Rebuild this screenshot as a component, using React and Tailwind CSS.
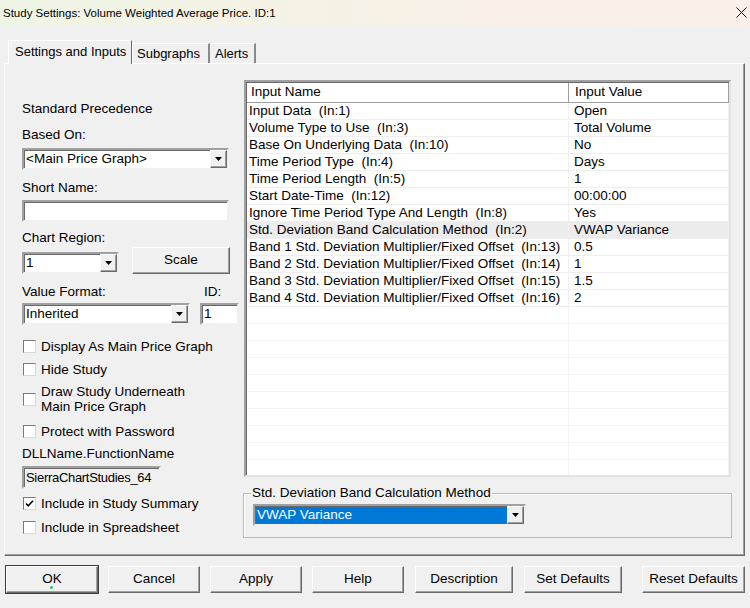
import React from "react";

const font = { fontFamily: '"Liberation Sans", Arial, sans-serif' };

const rows = [
  ["Input Data  (In:1)", "Open"],
  ["Volume Type to Use  (In:3)", "Total Volume"],
  ["Base On Underlying Data  (In:10)", "No"],
  ["Time Period Type  (In:4)", "Days"],
  ["Time Period Length  (In:5)", "1"],
  ["Start Date-Time  (In:12)", "00:00:00"],
  ["Ignore Time Period Type And Length  (In:8)", "Yes"],
  ["Std. Deviation Band Calculation Method  (In:2)", "VWAP Variance", true],
  ["Band 1 Std. Deviation Multiplier/Fixed Offset  (In:13)", "0.5"],
  ["Band 2 Std. Deviation Multiplier/Fixed Offset  (In:14)", "1"],
  ["Band 3 Std. Deviation Multiplier/Fixed Offset  (In:15)", "1.5"],
  ["Band 4 Std. Deviation Multiplier/Fixed Offset  (In:16)", "2"],
];

const emptyRows = Array.from({ length: 10 });

const sunken =
  "border-2 border-t-[#a0a0a0] border-l-[#a0a0a0] border-r-[#f0f0f0] border-b-[#f0f0f0] shadow-[inset_1px_1px_0_#696969]";
const raised =
  "border border-t-white border-l-white border-r-[#696969] border-b-[#696969] shadow-[inset_-1px_-1px_0_#a0a0a0] bg-[#f0f0f0]";

const Arrow = () => (
  <div className={`w-[17px] h-full flex items-center justify-center ${raised}`}>
    <svg width="7" height="4" viewBox="0 0 7 4">
      <path d="M0 0h7L3.5 4z" fill="#000" />
    </svg>
  </div>
);

const Combo = ({ value, className = "", blue }) => (
  <div className={`flex h-[22px] ${sunken} ${className} ${blue ? "bg-[#0078d7] text-white" : "bg-white"}`}>
    <div className="flex-1 pl-[2px] leading-[18px] whitespace-nowrap overflow-hidden">{value}</div>
    <div className="h-[18px] bg-white">
      <Arrow />
    </div>
  </div>
);

const Check = ({ checked, children, className = "" }) => (
  <div className={`flex items-center ${className}`}>
    <div className="w-[13px] h-[13px] ml-[1px] mr-[5px] bg-white border border-t-[#7a7a7a] border-l-[#7a7a7a] border-r-[#d8d8d8] border-b-[#d8d8d8] flex items-center justify-center shrink-0">
      {checked && (
        <svg width="9" height="9" viewBox="0 0 9 9">
          <path d="M1 4.5l2.2 2.3L8 1.8" stroke="#000" strokeWidth="1.6" fill="none" />
        </svg>
      )}
    </div>
    <div className="leading-[15px]">{children}</div>
  </div>
);

const Btn = ({ children, className = "", def }) => (
  <button
    className={`relative h-[27px] ${raised} ${def ? "outline outline-1 outline-[#3c3c3c]" : ""} ${className}`}
  >
    {children}
    {def && <span className="absolute left-[43px] top-[19px] w-[3px] h-[3px] rounded-full bg-[#22c55e]" />}
  </button>
);

export default function App() {
  return (
    <div className="w-[750px] h-[608px] bg-[#f0f0f0] text-black text-[13.5px] overflow-hidden" style={font}>
      {/* title bar */}
      <div className="h-[25px] flex items-center justify-between pl-[3px] pr-[3px] bg-gradient-to-r from-[#eef5e4] via-[#f7f1e6] to-[#faf0e8]">
        <span className="text-[11.5px] leading-[14px]">Study Settings: Volume Weighted Average Price. ID:1</span>
        <svg width="11" height="11" viewBox="0 0 11 11">
          <path d="M0.5 0.5l10 10M10.5 0.5l-10 10" stroke="#111" strokeWidth="1" />
        </svg>
      </div>

      {/* tabs */}
      <div className="flex items-end pl-[8px] pt-[15px] text-[13px]">
        <div className="relative z-10 -mb-px h-[24px] w-[124px] bg-[#f0f0f0] border-t border-l border-t-white border-l-white border-r border-r-[#696969] pl-[6px] leading-[22px]">
          Settings and Inputs
        </div>
        <div className="h-[20px] w-[78px] border-t border-l border-t-white border-l-white border-r-2 border-r-[#8a8a8a] pl-[4px] leading-[19px]">
          Subgraphs
        </div>
        <div className="h-[20px] w-[46px] border-t border-t-white border-r-2 border-r-[#8a8a8a] pl-[5px] leading-[19px]">
          Alerts
        </div>
      </div>

      {/* tab panel */}
      <div className="ml-[4px] w-[741px] h-[493px] border border-t-white border-l-white border-r-[#696969] border-b-[#696969] shadow-[inset_-1px_-1px_0_#a0a0a0] flex pl-[17px]">
        {/* left column */}
        <div className="w-[220px] flex flex-col">
          <div className="mt-[37px] h-[16px] leading-[16px]">Standard Precedence</div>
          <div className="mt-[10px] h-[16px] leading-[16px]">Based On:</div>
          <Combo value="<Main Price Graph>" className="mt-[5px] w-[207px]" />
          <div className="mt-[10px] h-[16px] leading-[16px]">Short Name:</div>
          <div className={`mt-[4px] w-[207px] h-[22px] bg-white ${sunken}`} />
          <div className="mt-[8px] h-[16px] leading-[16px]">Chart Region:</div>
          <div className="mt-[1px] flex items-start h-[27px]">
            <Combo value="1" className="mt-[5px] w-[97px]" />
            <Btn className="ml-[13px] w-[98px]">Scale</Btn>
          </div>
          <div className="mt-[10px] h-[16px] leading-[16px] flex">
            <span className="w-[182px]">Value Format:</span>
            <span>ID:</span>
          </div>
          <div className="mt-[3px] flex">
            <Combo value="Inherited" className="w-[168px]" />
            <div className={`ml-[10px] w-[39px] h-[22px] bg-white pl-[2px] leading-[18px] ${sunken}`}>1</div>
          </div>
          <Check className="mt-[13px] h-[16px]">Display As Main Price Graph</Check>
          <Check className="mt-[7px] h-[16px]">Hide Study</Check>
          <Check className="mt-[7px] h-[30px]">
            Draw Study Underneath
            <br />
            Main Price Graph
          </Check>
          <Check className="mt-[9px] h-[16px]">Protect with Password</Check>
          <div className="mt-[7px] h-[16px] leading-[16px]">DLLName.FunctionName</div>
          <div className={`mt-[4px] w-[139px] h-[23px] bg-[#f0f0f0] pl-[2px] text-[13px] tracking-[-0.3px] leading-[19px] whitespace-nowrap overflow-hidden ${sunken}`}>
            SierraChartStudies_64
          </div>
          <Check checked className="mt-[6px] h-[16px]">Include in Study Summary</Check>
          <Check className="mt-[8px] h-[16px]">Include in Spreadsheet</Check>
        </div>

        {/* right column */}
        <div className="ml-[1px] w-[489px] flex flex-col">
          <div className="mt-[16px] ml-[1px] w-[487px] h-[397px] bg-white border-2 border-t-[#a0a0a0] border-l-[#a0a0a0] border-r-[#e3e3e3] border-b-[#e3e3e3] shadow-[inset_1px_1px_0_#696969] overflow-hidden">
            <div className="flex h-[20px] mt-[1px]">
              <div className="w-[322px] pl-[4px] leading-[18px] border-b border-r border-[#a0a0a0] bg-white ml-[1px]">Input Name</div>
              <div className="w-[160px] pl-[6px] leading-[18px] border-b border-r border-[#a0a0a0] bg-white">Input Value</div>
            </div>
            {rows.map(([name, value, hl], i) => (
              <div key={i} className={`flex h-[17px] ml-[1px] ${hl ? "bg-[#ececec]" : ""}`}>
                <div className="w-[322px] pl-[2px] leading-[16px] whitespace-pre border-b border-r border-[#efefef]">{name}</div>
                <div className="w-[160px] pl-[5px] leading-[16px] whitespace-pre border-b border-r border-[#efefef]">{value}</div>
              </div>
            ))}
            {emptyRows.map((_, i) => (
              <div key={`e${i}`} className="flex h-[17px] ml-[1px]">
                <div className="w-[322px] border-b border-r border-[#f3f3f3]" />
                <div className="w-[160px] border-b border-r border-[#f3f3f3]" />
              </div>
            ))}
          </div>

          <fieldset className="mt-[8px] w-[489px] border border-[#b9b9b9] shadow-[inset_1px_1px_0_#ffffff] pl-[9px] pb-[11px]">
            <legend className="px-[1px] -ml-[2px] leading-[16px]">Std. Deviation Band Calculation Method</legend>
            <Combo value="VWAP Variance" blue className="mt-[3px] w-[273px]" />
          </fieldset>
        </div>
      </div>

      {/* buttons */}
      <div className="flex mt-[10px]">
        <Btn def className="ml-[6px] w-[92px]">OK</Btn>
        <Btn className="ml-[10px] w-[92px]">Cancel</Btn>
        <Btn className="ml-[10px] w-[92px]">Apply</Btn>
        <Btn className="ml-[10px] w-[92px]">Help</Btn>
        <Btn className="ml-[11px] w-[98px]">Description</Btn>
        <Btn className="ml-[11px] w-[98px]">Set Defaults</Btn>
        <Btn className="ml-[20px] w-[103px]">Reset Defaults</Btn>
      </div>
    </div>
  );
}
